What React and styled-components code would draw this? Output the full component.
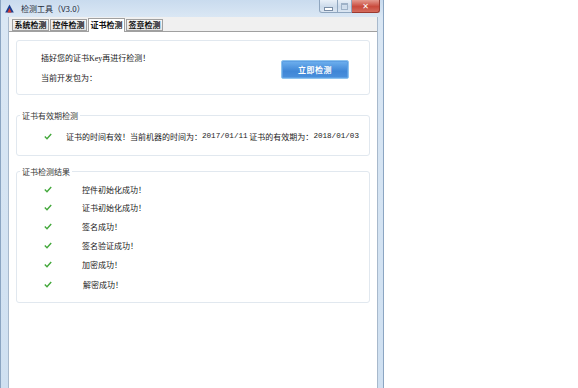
import styled, { createGlobalStyle } from 'styled-components'

const Global = createGlobalStyle`
  html, body {
    margin: 0;
    padding: 0;
    background: #ffffff;
  }
  body {
    width: 578px;
    height: 388px;
    overflow: hidden;
    font-family: "Noto Sans CJK SC", "Noto Sans", sans-serif;
  }
`

const Window = styled.div`
  width: 384px;
  height: 388px;
  display: flex;
  flex-direction: column;
  background: linear-gradient(to bottom, #c9dbee 0px, #dae7f4 17px, #cfe0f1 100%);
  box-sizing: border-box;
  padding: 0 5px 0 7px;
  border-left: 1px solid #8ba5c2;
  border-right: 1px solid #8ba5c2;
`

const TitleBar = styled.div`
  height: 17px;
  display: flex;
  align-items: flex-start;
  margin-left: -3px;
`

const AppIcon = styled.svg`
  width: 9px;
  height: 9px;
  margin: 4px 6px 0 0;
`

const Title = styled.div`
  font-size: 8px;
  line-height: 17px;
  color: #1e2b3a;
  margin-left: 1px;
`

const Caption = styled.div`
  margin-left: auto;
  display: flex;
  margin-right: -2px;
`

const CapBtn = styled.div`
  width: ${p => p.$w}px;
  height: 13px;
  box-sizing: border-box;
  border: 1px solid ${p => (p.$close ? '#9c3a30' : '#8fa6bf')};
  border-top: none;
  border-left-width: ${p => (p.$first ? 1 : 0)}px;
  border-radius: ${p => (p.$first ? '0 0 0 3px' : p.$close ? '0 0 3px 0' : '0')};
  background: ${p =>
    p.$close
      ? 'linear-gradient(to bottom, #e49a8f, #c94a3c 55%, #d46c5e)'
      : 'linear-gradient(to bottom, #e9f0f8, #cddbeb 55%, #dbe6f2)'};
  display: flex;
  align-items: center;
  justify-content: center;
  color: #ffffff;
  font-family: "DejaVu Sans", sans-serif;
  font-weight: bold;
  font-size: 8px;
`

const MinGlyph = styled.div`
  width: 7px;
  height: 2px;
  background: #ffffff;
  border: 1px solid #7b8ea6;
  margin-top: 5px;
`

const MaxGlyph = styled.div`
  width: 5px;
  height: 4px;
  border: 1px solid #9fb2c8;
  border-top-width: 2px;
`

const Client = styled.div`
  flex: 1;
  background: #f0f0f0;
  display: flex;
  flex-direction: column;
  border-left: 1px solid #a8b9cc;
  border-right: 1px solid #a8b9cc;
`

const TabStrip = styled.div`
  height: 14px;
  display: flex;
  align-items: flex-end;
  padding-left: 3px;
  gap: 1px;
`

const Tab = styled.div`
  width: 37px;
  height: ${p => (p.$active ? 14 : 12)}px;
  box-sizing: border-box;
  border: 1px solid #a0a0a0;
  border-bottom: ${p => (p.$active ? 'none' : '1px solid #a0a0a0')};
  background: ${p => (p.$active ? '#ffffff' : 'linear-gradient(to bottom, #f5f5f5, #e4e4e4)')};
  font-size: 8px;
  font-weight: bold;
  line-height: ${p => (p.$active ? 12 : 10)}px;
  text-align: center;
  color: #111111;
  margin-bottom: ${p => (p.$active ? -1 : 0)}px;
  position: relative;
  z-index: ${p => (p.$active ? 1 : 0)};
`

const Page = styled.div`
  flex: 1;
  background: #ffffff;
  border-top: 1px solid #a0a0a0;
  padding: 8px 7px 0 7px;
  display: flex;
  flex-direction: column;
`

const Panel = styled.div`
  height: 55px;
  box-sizing: border-box;
  border: 1px solid #e1e8ef;
  border-radius: 3px;
  display: flex;
  align-items: center;
  padding: 0 20px 0 24px;
`

const PanelText = styled.div`
  display: flex;
  flex-direction: column;
  gap: 9px;
  font-size: 8px;
  color: #1a1a1a;
  line-height: 10px;
`

const Latin = styled.span`
  font-family: "Liberation Serif", serif;
  font-size: 8px;
`

const CheckButton = styled.div`
  margin-left: auto;
  width: 68px;
  height: 19px;
  box-sizing: border-box;
  border: 1px solid #8ec3ee;
  border-radius: 2px;
  background: linear-gradient(to bottom, #6fb1ef, #3f86d6 60%, #4a90dc);
  box-shadow: inset 0 0 0 1px #5c9fe4;
  color: #ffffff;
  font-size: 8px;
  font-weight: bold;
  display: flex;
  align-items: center;
  justify-content: center;
  letter-spacing: 0.5px;
  margin-top: 3px;
`

const Group = styled.div`
  margin-top: ${p => p.$top}px;
  border: 1px solid #e1e8ef;
  border-radius: 3px;
  position: relative;
  padding: ${p => p.$pad};
  display: flex;
  flex-direction: column;
`

const Legend = styled.div`
  position: absolute;
  top: -6px;
  left: 3px;
  background: #ffffff;
  padding: 0 2px;
  font-size: 8px;
  line-height: 11px;
  color: #333333;
`

const Row = styled.div`
  display: flex;
  align-items: center;
  height: ${p => p.$h}px;
  font-size: 8px;
  color: #1a1a1a;
`

const Tick = styled.svg`
  width: 8px;
  height: 7px;
  margin-left: 27px;
  margin-right: ${p => p.$gap}px;
  flex-shrink: 0;
`

const Mono = styled.span`
  font-family: "Liberation Mono", monospace;
  font-size: 7.6px;
`

const Check = ({ gap }) => (
  <Tick $gap={gap} viewBox="0 0 8 7">
    <path d="M0.8 3.6 L3 5.8 L7.2 1" fill="none" stroke="#43a83b" strokeWidth="1.4" />
  </Tick>
)

const results = [
  { text: '控件初始化成功！', h: 18 },
  { text: '证书初始化成功！', h: 18 },
  { text: '签名成功！', h: 20 },
  { text: '签名验证成功！', h: 19 },
  { text: '加密成功！', h: 19 },
  { text: '解密成功！', h: 21 },
]

const tabs = ['系统检测', '控件检测', '证书检测', '签章检测']

export default function App() {
  return (
    <>
      <Global />
      <Window>
        <TitleBar>
          <AppIcon viewBox="0 0 9 9">
            <polygon points="4.5,0.5 8.8,8.5 0.2,8.5" fill="#1d3f8f" />
            <polygon points="4.5,4 6.6,8.5 2.4,8.5" fill="#d8382c" />
          </AppIcon>
          <Title>检测工具（V3.0）</Title>
          <Caption>
            <CapBtn $w={19} $first>
              <MinGlyph />
            </CapBtn>
            <CapBtn $w={14}>
              <MaxGlyph />
            </CapBtn>
            <CapBtn $w={28} $close>
              ✕
            </CapBtn>
          </Caption>
        </TitleBar>
        <Client>
          <TabStrip>
            {tabs.map((t, i) => (
              <Tab key={t} $active={i === 2}>
                {t}
              </Tab>
            ))}
          </TabStrip>
          <Page>
            <Panel>
              <PanelText>
                <div>
                  插好您的证书<Latin>Key</Latin>再进行检测！
                </div>
                <div>当前开发包为：</div>
              </PanelText>
              <CheckButton>立即检测</CheckButton>
            </Panel>
            <Group $top={20} $pad="5px 0 4px 0">
              <Legend>证书有效期检测</Legend>
              <Row $h={30}>
                <Check gap={14} />
                证书的时间有效！当前机器的时间为：<Mono>2017/01/11</Mono>&nbsp;证书的有效期为：
                <Mono>2018/01/03</Mono>
              </Row>
            </Group>
            <Group $top={15} $pad="8px 0 7px 0">
              <Legend>证书检测结果</Legend>
              {results.map((r, i) => (
                <Row key={r.text} $h={r.h}>
                  <Check gap={i === 5 ? 31 : 30} />
                  {r.text}
                </Row>
              ))}
            </Group>
          </Page>
        </Client>
      </Window>
    </>
  )
}
